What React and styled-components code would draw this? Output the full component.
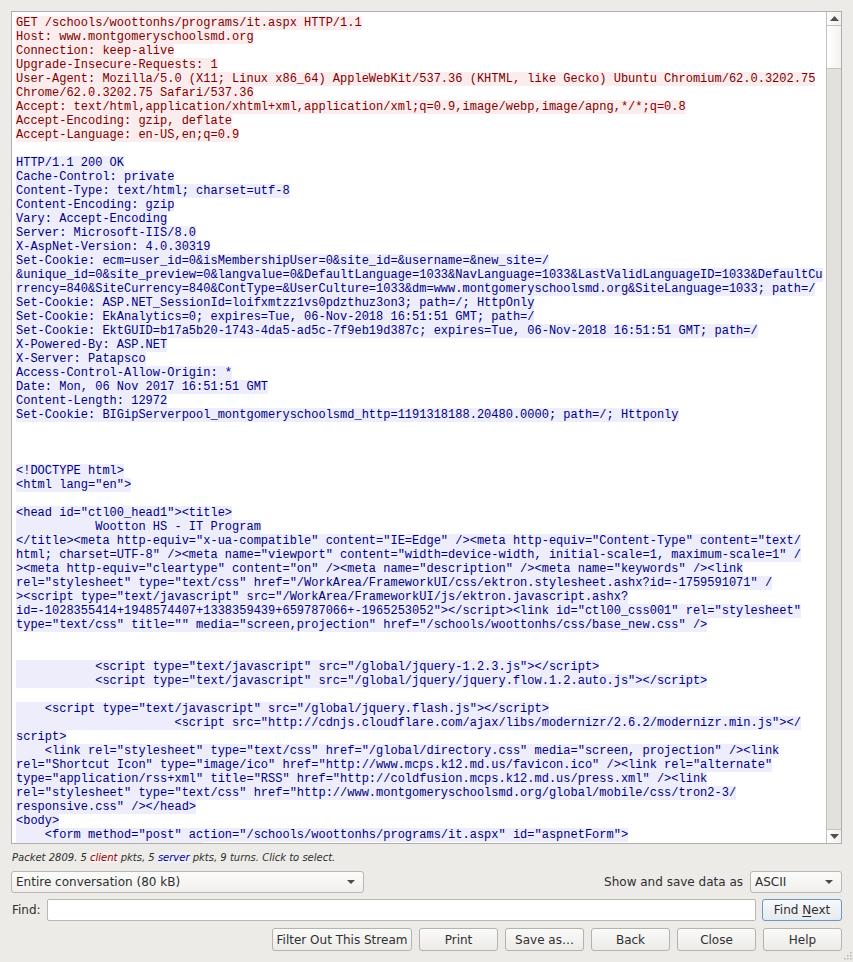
import styled, { createGlobalStyle } from 'styled-components';

const GlobalStyle = createGlobalStyle`
  html, body {
    margin: 0;
    padding: 0;
    background: #edebe8;
  }
  body {
    font-family: "DejaVu Sans", "Noto Sans", sans-serif;
    font-size: 12px;
    color: #2f2f2f;
  }
`;

const c = (text) => ({ dir: 'client', text });
const s = (text) => ({ dir: 'server', text });
const blank = { dir: null, text: '' };

const lines = [
  c('GET /schools/woottonhs/programs/it.aspx HTTP/1.1'),
  c('Host: www.montgomeryschoolsmd.org'),
  c('Connection: keep-alive'),
  c('Upgrade-Insecure-Requests: 1'),
  c('User-Agent: Mozilla/5.0 (X11; Linux x86_64) AppleWebKit/537.36 (KHTML, like Gecko) Ubuntu Chromium/62.0.3202.75'),
  c('Chrome/62.0.3202.75 Safari/537.36'),
  c('Accept: text/html,application/xhtml+xml,application/xml;q=0.9,image/webp,image/apng,*/*;q=0.8'),
  c('Accept-Encoding: gzip, deflate'),
  c('Accept-Language: en-US,en;q=0.9'),
  blank,
  s('HTTP/1.1 200 OK'),
  s('Cache-Control: private'),
  s('Content-Type: text/html; charset=utf-8'),
  s('Content-Encoding: gzip'),
  s('Vary: Accept-Encoding'),
  s('Server: Microsoft-IIS/8.0'),
  s('X-AspNet-Version: 4.0.30319'),
  s('Set-Cookie: ecm=user_id=0&isMembershipUser=0&site_id=&username=&new_site=/'),
  s('&unique_id=0&site_preview=0&langvalue=0&DefaultLanguage=1033&NavLanguage=1033&LastValidLanguageID=1033&DefaultCu'),
  s('rrency=840&SiteCurrency=840&ContType=&UserCulture=1033&dm=www.montgomeryschoolsmd.org&SiteLanguage=1033; path=/'),
  s('Set-Cookie: ASP.NET_SessionId=loifxmtzz1vs0pdzthuz3on3; path=/; HttpOnly'),
  s('Set-Cookie: EkAnalytics=0; expires=Tue, 06-Nov-2018 16:51:51 GMT; path=/'),
  s('Set-Cookie: EktGUID=b17a5b20-1743-4da5-ad5c-7f9eb19d387c; expires=Tue, 06-Nov-2018 16:51:51 GMT; path=/'),
  s('X-Powered-By: ASP.NET'),
  s('X-Server: Patapsco'),
  s('Access-Control-Allow-Origin: *'),
  s('Date: Mon, 06 Nov 2017 16:51:51 GMT'),
  s('Content-Length: 12972'),
  s('Set-Cookie: BIGipServerpool_montgomeryschoolsmd_http=1191318188.20480.0000; path=/; Httponly'),
  blank,
  blank,
  blank,
  s('<!DOCTYPE html>'),
  s('<html lang="en">'),
  blank,
  s('<head id="ctl00_head1"><title>'),
  s('           Wootton HS - IT Program'),
  s('</title><meta http-equiv="x-ua-compatible" content="IE=Edge" /><meta http-equiv="Content-Type" content="text/'),
  s('html; charset=UTF-8" /><meta name="viewport" content="width=device-width, initial-scale=1, maximum-scale=1" /'),
  s('><meta http-equiv="cleartype" content="on" /><meta name="description" /><meta name="keywords" /><link'),
  s('rel="stylesheet" type="text/css" href="/WorkArea/FrameworkUI/css/ektron.stylesheet.ashx?id=-1759591071" /'),
  s('><script type="text/javascript" src="/WorkArea/FrameworkUI/js/ektron.javascript.ashx?'),
  s('id=-1028355414+1948574407+1338359439+659787066+-1965253052"></script><link id="ctl00_css001" rel="stylesheet"'),
  s('type="text/css" title="" media="screen,projection" href="/schools/woottonhs/css/base_new.css" />'),
  blank,
  blank,
  s('           <script type="text/javascript" src="/global/jquery-1.2.3.js"></script>'),
  s('           <script type="text/javascript" src="/global/jquery/jquery.flow.1.2.auto.js"></script>'),
  blank,
  s('    <script type="text/javascript" src="/global/jquery.flash.js"></script>'),
  s('                      <script src="http://cdnjs.cloudflare.com/ajax/libs/modernizr/2.6.2/modernizr.min.js"></'),
  s('script>'),
  s('    <link rel="stylesheet" type="text/css" href="/global/directory.css" media="screen, projection" /><link'),
  s('rel="Shortcut Icon" type="image/ico" href="http://www.mcps.k12.md.us/favicon.ico" /><link rel="alternate"'),
  s('type="application/rss+xml" title="RSS" href="http://coldfusion.mcps.k12.md.us/press.xml" /><link'),
  s('rel="stylesheet" type="text/css" href="http://www.montgomeryschoolsmd.org/global/mobile/css/tron2-3/'),
  s('responsive.css" /></head>'),
  s('<body>'),
  s('    <form method="post" action="/schools/woottonhs/programs/it.aspx" id="aspnetForm">'),
  s('<div class="aspNetHidden">'),
];

const colors = {
  client: { fg: '#7f0000', bg: '#fbeded' },
  server: { fg: '#00007f', bg: '#ededfb' },
};

function Arrow({ up }) {
  return (
    <svg width="9" height="5" viewBox="0 0 9 5">
      <path d={up ? 'M0 5 L4.5 0 L9 5 Z' : 'M0 0 L4.5 5 L9 0 Z'} fill="#505050" />
    </svg>
  );
}

function ComboArrow() {
  return (
    <svg width="8" height="4" viewBox="0 0 8 4">
      <path d="M0 0 L4 4 L8 0 Z" fill="#4a4a4a" />
    </svg>
  );
}

function Grip() {
  const dots = [[6, 0], [3, 3], [6, 3], [0, 6], [3, 6], [6, 6]];
  return (
    <GripBox>
      <svg width="9" height="9" viewBox="0 0 9 9">
        {dots.map(([x, y]) => (
          <rect key={`${x}-${y}`} x={x + 1} y={y + 1} width="1.5" height="1.5" fill="#b7b4ae" />
        ))}
      </svg>
    </GripBox>
  );
}

export default function App() {
  return (
    <>
      <GlobalStyle />
      <Dialog>
        <StreamPane>
          <StreamText>
            {lines.map((l, i) => (
              <Line key={i}>
                {l.text && <Chunk $dir={l.dir}>{l.text}</Chunk>}
              </Line>
            ))}
          </StreamText>
          <ScrollBar>
            <ScrollButton $top>
              <Arrow up />
            </ScrollButton>
            <Thumb />
            <Track />
            <ScrollButton>
              <Arrow />
            </ScrollButton>
          </ScrollBar>
        </StreamPane>

        <Status>
          Packet 2809. 5 <Tag $dir="client">client</Tag> pkts, 5 <Tag $dir="server">server</Tag> pkts, 9 turns. Click to select.
        </Status>

        <Row>
          <Combo $width={353}>
            <span>Entire conversation (80 kB)</span>
            <ComboArrow />
          </Combo>
          <Group>
            <Label>Show and save data as</Label>
            <Combo $width={92}>
              <span>ASCII</span>
              <ComboArrow />
            </Combo>
          </Group>
        </Row>

        <Row $gap={6}>
          <Label $pad>Find:</Label>
          <FindInput />
          <Button $default $width={80}>
            <span>
              Find <u>N</u>ext
            </span>
          </Button>
        </Row>

        <ButtonRow>
          <Button $width={140}>Filter Out This Stream</Button>
          <Button>Print</Button>
          <Button>Save as…</Button>
          <Button>Back</Button>
          <Button>Close</Button>
          <Button>Help</Button>
        </ButtonRow>

        <Grip />
      </Dialog>
    </>
  );
}

/* ---------- styled components ---------- */

const Dialog = styled.div`
  position: relative;
  box-sizing: border-box;
  width: 853px;
  height: 962px;
  padding: 11px 11px 0 11px;
  display: flex;
  flex-direction: column;
`;

const StreamPane = styled.div`
  box-sizing: border-box;
  height: 833px;
  display: flex;
  border: 1px solid #b2afaa;
  background: #ffffff;
  overflow: hidden;
`;

const StreamText = styled.div`
  flex: 1;
  min-width: 0;
  padding: 4px 0 0 4px;
  overflow: hidden;
  font-family: "Liberation Mono", "DejaVu Sans Mono", monospace;
  font-size: 12px;
`;

const Line = styled.div`
  height: 14px;
  line-height: 14px;
  white-space: pre;
`;

const Chunk = styled.span`
  display: inline-block;
  height: 14px;
  line-height: 14px;
  vertical-align: top;
  color: ${(p) => colors[p.$dir].fg};
  background: ${(p) => colors[p.$dir].bg};
`;

const ScrollBar = styled.div`
  width: 14px;
  flex: none;
  display: flex;
  flex-direction: column;
  border-left: 1px solid #c3c0bb;
  background: #e3e1dd;
`;

const ScrollButton = styled.div`
  height: 13px;
  flex: none;
  display: flex;
  align-items: center;
  justify-content: center;
  background: linear-gradient(90deg, #fdfdfd, #f1f0ee);
  ${(p) => (p.$top ? 'border-bottom: 1px solid #c6c3be;' : 'border-top: 1px solid #c6c3be;')}
`;

const Thumb = styled.div`
  height: 43px;
  flex: none;
  box-sizing: border-box;
  background: linear-gradient(90deg, #ffffff, #f3f2f0);
  border-bottom: 1px solid #c6c3be;
`;

const Track = styled.div`
  flex: 1;
  background: #e3e1dd;
`;

const Status = styled.div`
  height: 27px;
  line-height: 27px;
  padding-left: 1px;
  font-size: 10px;
  font-style: italic;
  color: #2f2f2f;
  white-space: nowrap;
`;

const Tag = styled.span`
  color: ${(p) => colors[p.$dir].fg};
  background: ${(p) => colors[p.$dir].bg};
`;

const Row = styled.div`
  height: 22px;
  display: flex;
  align-items: center;
  justify-content: space-between;
  gap: ${(p) => p.$gap || 7}px;
  margin-bottom: ${(p) => (p.$gap ? 7 : 6)}px;
`;

const Group = styled.div`
  display: flex;
  align-items: center;
  gap: 7px;
`;

const Label = styled.span`
  white-space: nowrap;
  padding-left: ${(p) => (p.$pad ? 1 : 0)}px;
  color: #2f2f2f;
`;

const Combo = styled.div`
  box-sizing: border-box;
  width: ${(p) => p.$width}px;
  height: 22px;
  display: flex;
  align-items: center;
  justify-content: space-between;
  padding: 0 8px 0 4px;
  border: 1px solid #bab7b2;
  border-radius: 3px;
  background: linear-gradient(#fbfbfa, #f0efed);
  color: #2f2f2f;
`;

const FindInput = styled.div`
  flex: 1;
  height: 22px;
  box-sizing: border-box;
  border: 1px solid #bab7b2;
  border-radius: 2px;
  background: #ffffff;
`;

const ButtonRow = styled.div`
  height: 23px;
  display: flex;
  justify-content: flex-end;
  gap: 7px;
`;

const Button = styled.div`
  box-sizing: border-box;
  width: ${(p) => p.$width || 79}px;
  height: ${(p) => (p.$default ? 22 : 23)}px;
  flex: none;
  display: flex;
  align-items: center;
  justify-content: center;
  border: 1px solid ${(p) => (p.$default ? '#6a98c6' : '#b6b3ae')};
  border-radius: 3px;
  background: ${(p) =>
    p.$default
      ? 'linear-gradient(#f7f9fb, #e6eaee)'
      : 'linear-gradient(#fafaf9, #ecebe8)'};
  color: #2f2f2f;
  white-space: pre;

  u {
    text-decoration-thickness: 1px;
    text-underline-offset: 2px;
  }
`;

const GripBox = styled.div`
  position: absolute;
  right: 1px;
  bottom: 2px;
  width: 9px;
  height: 9px;
  line-height: 0;
`;
